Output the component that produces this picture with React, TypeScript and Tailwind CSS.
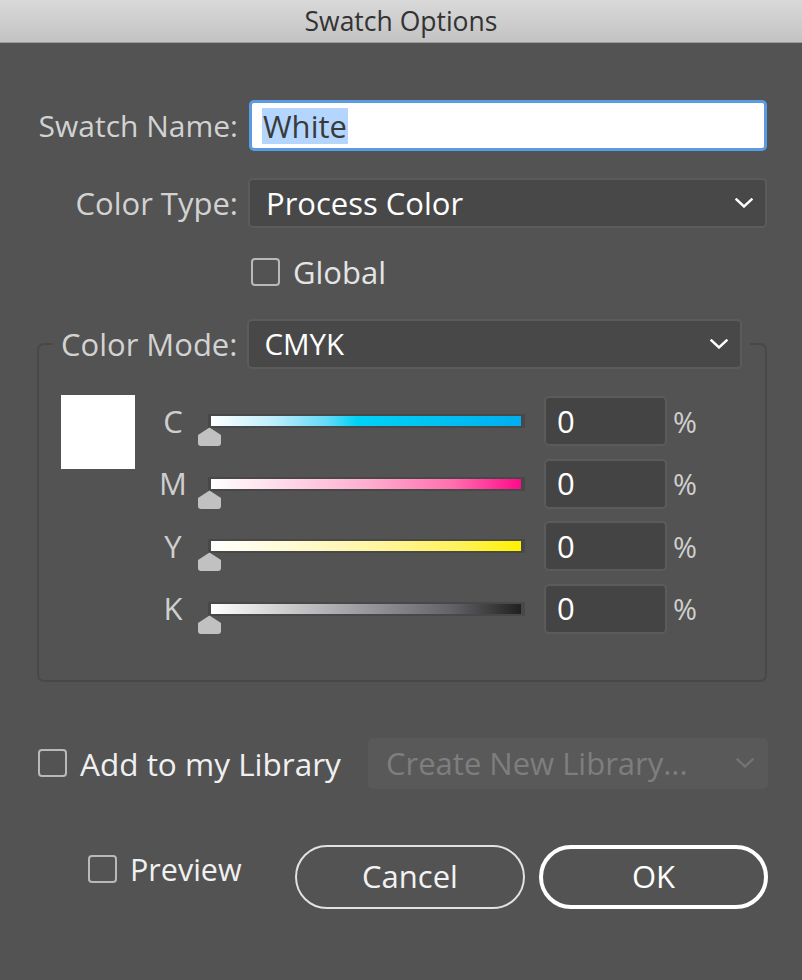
import React from "react";

function Chevron({ color = "#ffffff" }: { color?: string }) {
  return (
    <svg width="18" height="10" viewBox="0 0 18 10" fill="none">
      <path d="M1.5 1.5 L9 8.5 L16.5 1.5" stroke={color} strokeWidth="2.4" strokeLinecap="square" />
    </svg>
  );
}

function Checkbox() {
  return <div className="w-[29px] h-[28px] shrink-0 rounded-[4px] border-2 border-[#b9b9b9]" />;
}

function Thumb() {
  return (
    <svg width="23" height="19" viewBox="0 0 23 19">
      <path d="M11.5 0.5 L23 8 V16 Q23 19 20 19 H3 Q0 19 0 16 V8 Z" fill="#c1c1c1" />
    </svg>
  );
}

const rows = [
  { l: "C", g: "linear-gradient(to right, #ffffff 0%, #bfeefc 20%, #5fd9f7 38%, #00d3f6 47%, #00c4f3 70%, #00aeef 100%)" },
  { l: "M", g: "linear-gradient(to right, #ffffff 0%, #ffd6e6 25%, #ffaed0 50%, #ff6fae 78%, #ff0a8a 100%)" },
  { l: "Y", g: "linear-gradient(to right, #ffffff 0%, #fffbd6 25%, #fff59e 55%, #fff15a 80%, #fff200 100%)" },
  { l: "K", g: "linear-gradient(to right, #ffffff 0%, #c9cbcd 25%, #97999c 50%, #606266 78%, #231f20 100%)" },
];

export default function App() {
  return (
    <div className="w-[802px] h-[980px] bg-[#535353] overflow-hidden font-['Open_Sans',sans-serif] select-none whitespace-nowrap">
      <div className="h-[43px] border-b border-[#9c9c9c] bg-gradient-to-b from-[#d9d9d9] to-[#c3c3c3] flex items-center justify-center text-[26.5px] leading-none text-[#333333]">
        Swatch Options
      </div>
      <div className="pl-[37px] pr-[35px] pt-[57px]">
        {/* Swatch name */}
        <div className="flex items-center h-[51px]">
          <div className="w-[201px] text-right text-[30px] leading-none text-[#d2d2d2]">Swatch Name:</div>
          <div className="ml-[11px] flex-1 h-[51px] bg-white rounded-[5px] border-[3px] border-[#5a9be2] flex items-center pl-[10px]">
            <span className="bg-[#b4d6fe] text-[#3a3a3a] text-[31px] leading-[36px] px-[1px]">White</span>
          </div>
        </div>
        {/* Color type */}
        <div className="flex items-center h-[50px] mt-[27px]">
          <div className="w-[201px] text-right text-[31px] leading-none text-[#d2d2d2]">Color Type:</div>
          <div className="ml-[10px] flex-1 h-[50px] bg-[#484848] rounded-[5px] border-2 border-[#5b5b5b] flex items-center justify-between pl-[16px] pr-[12px]">
            <span className="text-white text-[31px] leading-none">Process Color</span>
            <Chevron />
          </div>
        </div>
        {/* Global */}
        <div className="flex items-center mt-[30px] ml-[214px] h-[28px]">
          <Checkbox />
          <span className="ml-[13px] text-[31px] leading-none text-[#e4e4e4]">Global</span>
        </div>
        {/* Fieldset */}
        <fieldset className="mt-[33px] border-2 border-[#484848] rounded-[7px] p-0">
          <legend className="ml-[14px] pl-[8px] pr-[8px]">
            <div className="flex items-center">
              <span className="text-[31px] leading-none text-[#d2d2d2]">Color Mode:</span>
              <div className="ml-[10px] w-[495px] h-[50px] bg-[#484848] rounded-[5px] border-2 border-[#5b5b5b] flex items-center justify-between pl-[15px] pr-[12px]">
                <span className="text-white text-[29.5px] leading-none">CMYK</span>
                <Chevron />
              </div>
            </div>
          </legend>
          <div className="flex items-start mt-[26px] pl-[22px] pb-[46px]">
            <div className="w-[74px] h-[74px] bg-white shrink-0" />
            <div className="flex flex-col gap-[12.67px] pt-[1px]">
              {rows.map((r) => (
                <div key={r.l} className="flex items-center h-[50px]">
                  <div className="ml-[18px] w-[40px] text-center text-[31px] leading-none text-[#cfcfcf]">{r.l}</div>
                  <div className="relative w-[332px] h-[50px] flex items-center">
                    <div className="ml-[15px] w-[317px] h-[14px] bg-[#484848] pl-[3px] pr-[4px] pt-[2px] pb-[2px]">
                      <div className="w-full h-full" style={{ background: r.g }} />
                    </div>
                    <div className="absolute left-[5px] top-[31px] leading-none">
                      <Thumb />
                    </div>
                  </div>
                  <div className="ml-[19px] w-[123px] h-[50px] bg-[#444444] rounded-[5px] border-2 border-[#5b5b5b] flex items-center pl-[11px]">
                    <span className="text-white text-[31px] leading-none">0</span>
                  </div>
                  <span className="ml-[6px] text-[29px] leading-none text-[#cfcfcf]">%</span>
                </div>
              ))}
            </div>
          </div>
        </fieldset>
        {/* Library */}
        <div className="flex items-center mt-[56px] h-[51px]">
          <div className="ml-[1px]">
            <Checkbox />
          </div>
          <span className="ml-[13px] text-[31.5px] leading-none text-[#f0f0f0]">Add to my Library</span>
          <div className="ml-auto mr-[-1px] w-[400px] h-[51px] bg-[#595959] rounded-[5px] flex items-center justify-between pl-[18px] pr-[14px]">
            <span className="text-[31px] leading-none text-[#7e7e7e]">Create New Library...</span>
            <Chevron color="#737373" />
          </div>
        </div>
        {/* Buttons */}
        <div className="flex items-start mt-[56px]">
          <div className="flex items-center ml-[51px] mt-[10px] h-[29px]">
            <Checkbox />
            <span className="ml-[13px] text-[30.5px] leading-none text-[#f0f0f0]">Preview</span>
          </div>
          <div className="ml-auto mr-[-1px] flex gap-[14px]">
            <div className="w-[230px] h-[64px] rounded-full border-2 border-[#e2e2e2] flex items-center justify-center text-[31px] leading-none text-[#f2f2f2]">
              Cancel
            </div>
            <div className="w-[229px] h-[64px] rounded-full border-[4px] border-white flex items-center justify-center text-[31px] leading-none text-white">
              OK
            </div>
          </div>
        </div>
      </div>
    </div>
  );
}
